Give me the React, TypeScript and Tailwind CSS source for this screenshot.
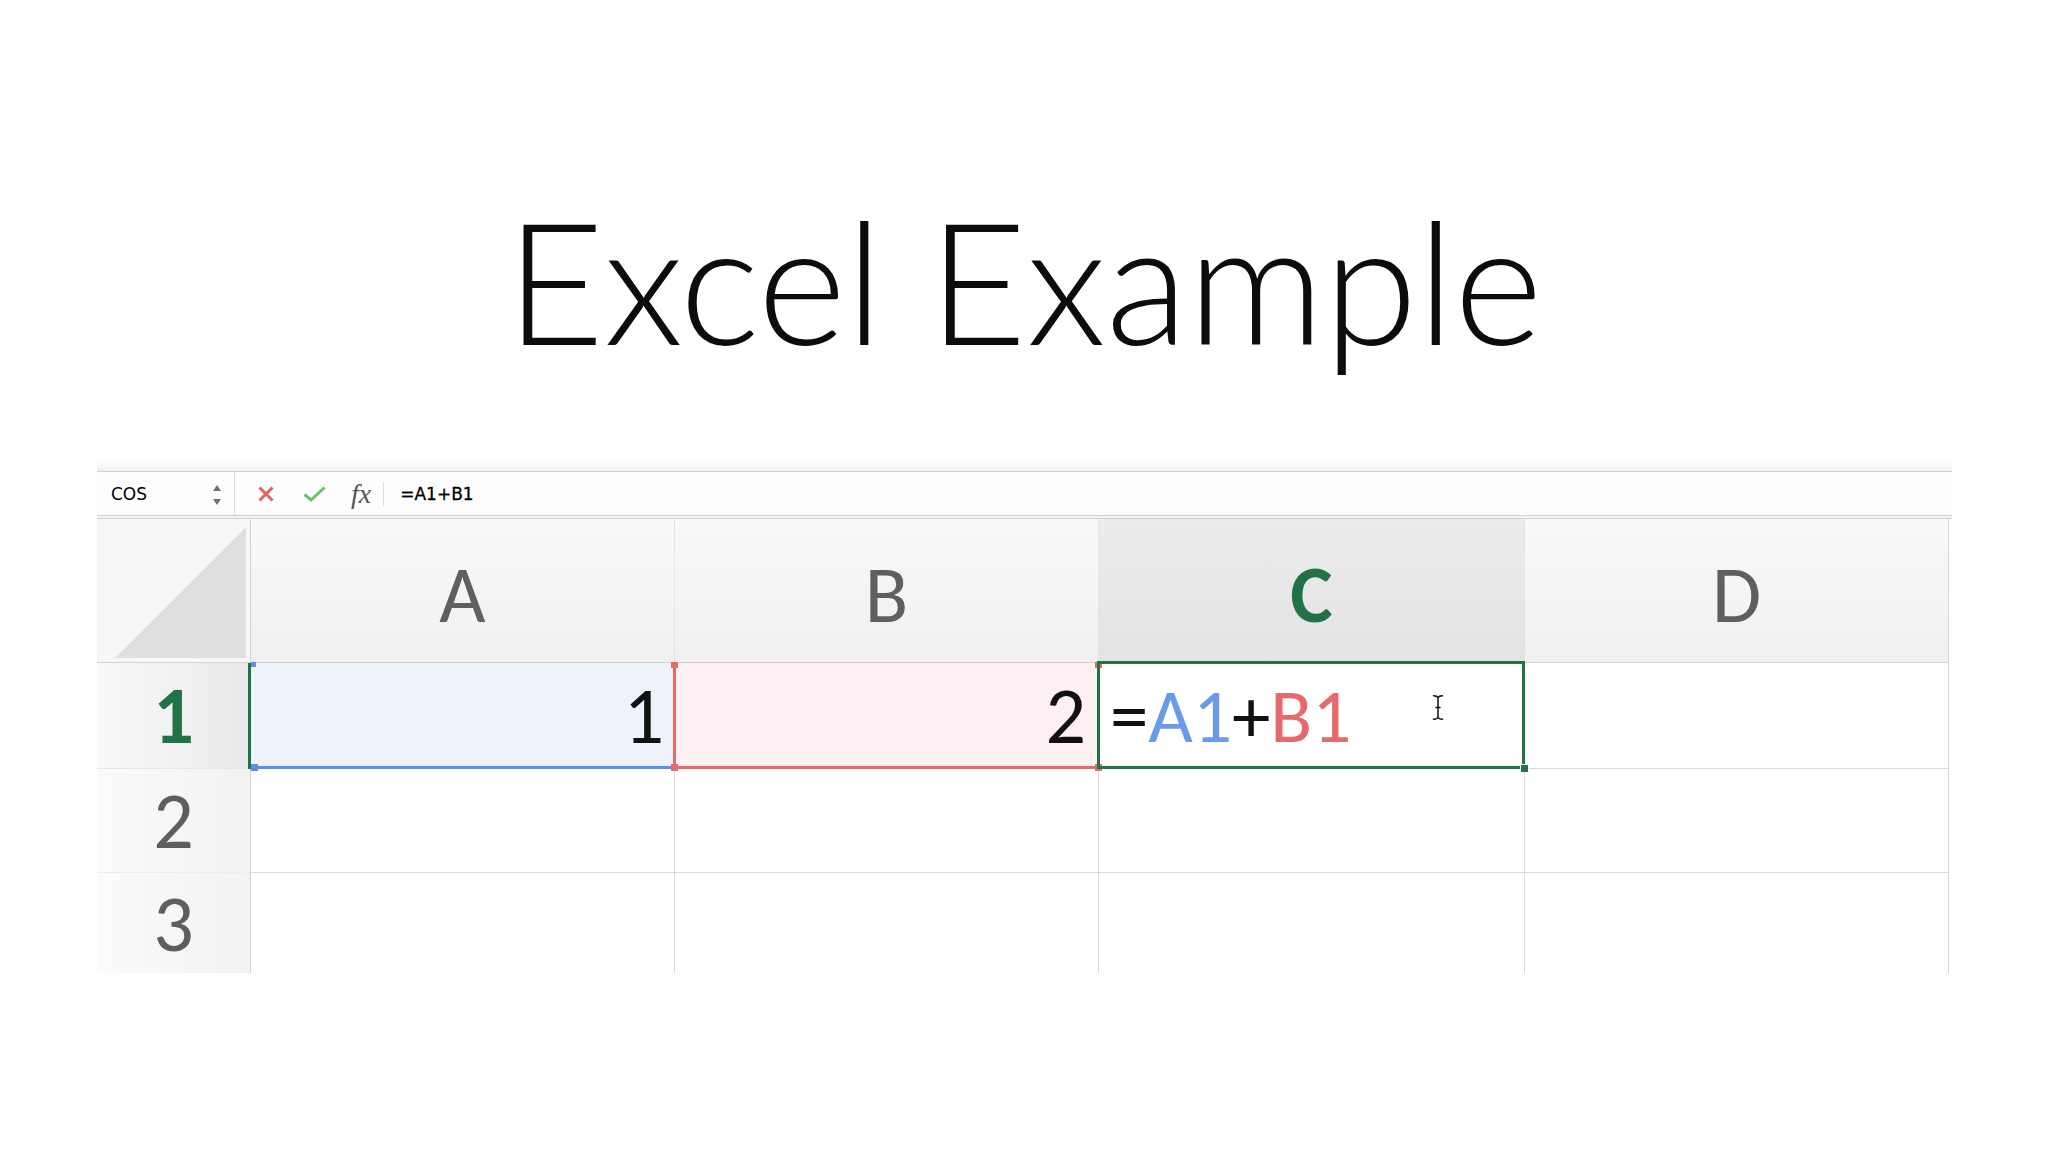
import React from "react";

const XIcon = () => (
  <svg width="18" height="16" viewBox="0 0 18 16" className="ml-[22px] shrink-0">
    <path d="M2.5 1.5 L15.5 14.5 M15.5 1.5 L2.5 14.5" stroke="#e06464" strokeWidth="3" strokeLinecap="butt" fill="none" />
  </svg>
);

const CheckIcon = () => (
  <svg width="23" height="16" viewBox="0 0 23 16" className="ml-[28px] shrink-0">
    <path d="M1.5 8.5 L8 14 L21.5 1.5" stroke="#6cbf6c" strokeWidth="3" fill="none" />
  </svg>
);

const Stepper = () => (
  <svg width="10" height="24" viewBox="0 0 10 24" className="shrink-0">
    <path d="M1 8 L5 2 L9 8 Z" fill="#707070" />
    <path d="M1 16 L5 22 L9 16 Z" fill="#707070" />
  </svg>
);

const IBeam = () => (
  <svg width="14" height="27" viewBox="0 0 14 27">
    <g fill="none" strokeLinecap="round">
      <path
        d="M2.5 1.8 C5 1.8 6.5 2.6 7 3.8 C7.5 2.6 9 1.8 11.5 1.8 M7 3.8 V23.2 M2.5 25.2 C5 25.2 6.5 24.4 7 23.2 C7.5 24.4 9 25.2 11.5 25.2 M5 13.5 H9"
        stroke="#ffffff"
        strokeWidth="3.4"
      />
      <path
        d="M2.5 1.8 C5 1.8 6.5 2.6 7 3.8 C7.5 2.6 9 1.8 11.5 1.8 M7 3.8 V23.2 M2.5 25.2 C5 25.2 6.5 24.4 7 23.2 C7.5 24.4 9 25.2 11.5 25.2 M5 13.5 H9"
        stroke="#111111"
        strokeWidth="1.5"
      />
    </g>
  </svg>
);

const cellFont = "font-['Carlito','Calibri','Open_Sans',sans-serif]";

export default function App() {
  return (
    <div className="w-[2048px] h-[1152px] bg-white overflow-hidden">
      <h1 className="pt-[194px] h-[366px] text-center text-[170px] leading-none font-light tracking-[-0.5px] text-[#0c0c0c] font-['Lato',sans-serif]">
        Excel Example
      </h1>

      <div className="mt-[94px] ml-[97px] w-[1855px]">
        <div className="h-[11px] bg-linear-to-b from-white to-[#f1f1f1]" />

        {/* formula bar */}
        <div className="flex items-center h-[45px] border-y border-[#d0d0d0] bg-[#fdfdfd] font-['DejaVu_Sans',sans-serif] text-[17px] text-[#000]">
          <div className="w-[138px] h-full flex items-center border-r border-[#dedede] pl-[14px] pr-[12px] pt-[2px]">
            <span className="leading-none">COS</span>
            <div className="ml-auto">
              <Stepper />
            </div>
          </div>
          <XIcon />
          <CheckIcon />
          <span className="ml-[25px] text-[28px] leading-none italic text-[#555] font-['Liberation_Serif',serif]">
            fx
          </span>
          <div className="ml-[12px] w-px h-[24px] bg-[#e0e0e0]" />
          <span className="ml-[16px] pt-[2px] leading-none [-webkit-text-stroke:0.3px_#000]">=A1+B1</span>
        </div>
        <div className="h-[2px] bg-[#f4f4f4]" />
        <div className="h-px bg-[#cfcfcf]" />

        {/* grid */}
        <div
          className={`grid w-[1852px] grid-cols-[154px_424px_424px_426px_424px] grid-rows-[144px_106px_104px_100px] ${cellFont}`}
        >
          {/* header row */}
          <div className="relative bg-[#f7f7f7] border-r border-b border-[#d2d2d2]">
            <svg width="153" height="143" viewBox="0 0 153 143" className="absolute left-0 top-0">
              <polygon points="18,139 149,139 149,8" fill="#dfdfdf" />
            </svg>
          </div>
          <div className="flex items-center justify-center pt-[8px] bg-linear-to-b from-[#f9f9f9] to-[#f0f0f0] border-r border-b border-r-[#e4e4e4] border-b-[#d2d2d2] text-[80px] leading-none text-[#5f5f5f]">
            A
          </div>
          <div className="flex items-center justify-center pt-[8px] bg-linear-to-b from-[#f9f9f9] to-[#f0f0f0] border-r border-b border-r-[#e4e4e4] border-b-[#d2d2d2] text-[80px] leading-none text-[#5f5f5f]">
            B
          </div>
          <div className="flex items-center justify-center pt-[8px] bg-linear-to-b from-[#ececec] to-[#e3e3e3] border-r border-b border-r-[#e4e4e4] border-b-[#d2d2d2] text-[80px] leading-none font-bold text-[#217346]">
            C
          </div>
          <div className="flex items-center justify-center pt-[8px] bg-linear-to-b from-[#f9f9f9] to-[#f0f0f0] border-r border-b border-r-[#d6d6d6] border-b-[#d2d2d2] text-[80px] leading-none text-[#5f5f5f]">
            D
          </div>

          {/* row 1 */}
          <div className="relative flex items-center justify-center pt-[1px] bg-linear-to-r from-[#f8f8f8] to-[#eaeaea] border-r border-b border-r-[#d2d2d2] border-b-[#e6e6e6] text-[80px] leading-none font-bold text-[#217346]">
            1
            <div className="absolute -right-[1px] top-0 -bottom-[1px] w-[3px] bg-[#217346]" />
          </div>
          <div className="relative flex items-center justify-end pr-[10px] pt-[1px] bg-[#eef2fb] border-r border-b border-[#dadada] text-[80px] leading-none text-[#111]">
            1
            <div className="absolute left-0 right-0 -bottom-[1px] h-[3px] bg-[#5b8ee6] z-[5]" />
            <div className="absolute left-0 -top-[1px] w-[5px] h-[5px] bg-[#5b8ee6] z-[5]" />
            <div className="absolute left-0 -bottom-[3px] w-[7px] h-[7px] bg-[#5b8ee6] z-[5]" />
          </div>
          <div className="relative flex items-center justify-end pr-[12px] pt-[1px] bg-[#fcf0f2] border-r border-b border-[#dadada] text-[80px] leading-none text-[#111]">
            2
            <div className="absolute -left-[2px] top-0 -bottom-[1px] w-[3px] bg-[#e46b6b] z-[5]" />
            <div className="absolute left-0 right-0 -bottom-[1px] h-[3px] bg-[#e46b6b] z-[5]" />
            <div className="absolute -left-[4px] -top-[1px] w-[7px] h-[6px] bg-[#e46b6b] z-[5]" />
            <div className="absolute -left-[4px] -bottom-[3px] w-[7px] h-[7px] bg-[#e46b6b] z-[5]" />
            <div className="absolute -right-[4px] -top-[1px] w-[7px] h-[6px] bg-[#e46b6b] z-[5]" />
            <div className="absolute -right-[4px] -bottom-[3px] w-[7px] h-[7px] bg-[#e46b6b] z-[5]" />
          </div>
          <div className="relative flex items-center justify-start pl-[11px] pt-[1px] bg-white border-r border-b border-[#dadada] text-[77px] leading-none text-[#111]">
            <span>=</span>
            <span className="text-[#6a9be9]">A1</span>
            <span>+</span>
            <span className="text-[#e66a6c]">B1</span>
            <div className="absolute -left-[2px] -top-[2px] -right-[1px] -bottom-[1px] border-[3px] border-[#217346] z-10" />
            <div className="absolute -right-[5px] -bottom-[5px] w-[9px] h-[9px] bg-[#217346] border border-white z-10" />
            <div className="absolute left-[332px] top-[31px] z-20">
              <IBeam />
            </div>
          </div>
          <div className="bg-white border-r border-b border-r-[#d6d6d6] border-b-[#dadada]" />

          {/* row 2 */}
          <div className="flex items-center justify-center pt-[1px] bg-linear-to-r from-[#fbfbfb] to-[#f2f2f2] border-r border-b border-r-[#d2d2d2] border-b-[#ededed] text-[80px] leading-none text-[#5e5e5e]">
            2
          </div>
          <div className="bg-white border-r border-b border-[#dadada]" />
          <div className="bg-white border-r border-b border-[#dadada]" />
          <div className="bg-white border-r border-b border-[#dadada]" />
          <div className="bg-white border-r border-b border-r-[#d6d6d6] border-b-[#dadada]" />

          {/* row 3 */}
          <div className="flex items-center justify-center pt-[1px] bg-linear-to-r from-[#fbfbfb] to-[#f2f2f2] border-r border-r-[#d2d2d2] text-[80px] leading-none text-[#5e5e5e]">
            3
          </div>
          <div className="bg-white border-r border-[#dadada]" />
          <div className="bg-white border-r border-[#dadada]" />
          <div className="bg-white border-r border-[#dadada]" />
          <div className="bg-white border-r border-[#d6d6d6]" />
        </div>
      </div>
    </div>
  );
}
